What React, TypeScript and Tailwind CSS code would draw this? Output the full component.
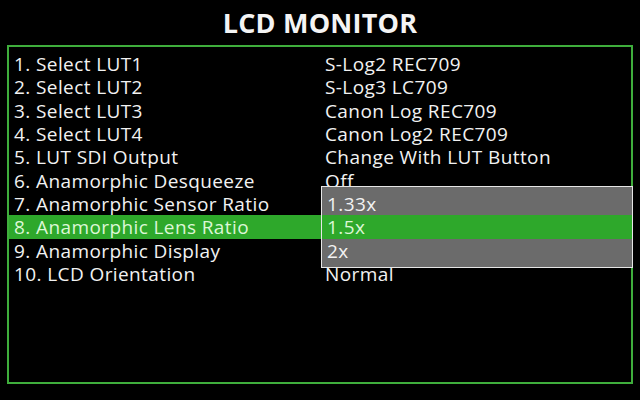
const rows = [
  ["1. Select LUT1", "S-Log2 REC709"],
  ["2. Select LUT2", "S-Log3 LC709"],
  ["3. Select LUT3", "Canon Log REC709"],
  ["4. Select LUT4", "Canon Log2 REC709"],
  ["5. LUT SDI Output", "Change With LUT Button"],
  ["6. Anamorphic Desqueeze", "Off"],
  ["7. Anamorphic Sensor Ratio", ""],
  ["8. Anamorphic Lens Ratio", ""],
  ["9. Anamorphic Display", ""],
  ["10. LCD Orientation", "Normal"],
];

const options = ["1.33x", "1.5x", "2x"];

export default function App() {
  return (
    <div
      className="relative h-[400px] w-[640px] overflow-hidden bg-black text-white"
      style={{ fontFamily: '"Open Sans", "Noto Sans", sans-serif' }}
    >
      <div className="flex h-[45px] items-center justify-center pt-[1px] text-[27px] leading-[32px] font-bold tracking-[0.2px] text-[#f4f4f4]">
        LCD MONITOR
      </div>
      <div className="mx-[7px] h-[339px] border-2 border-[#3fae3c] pt-[5px]">
        {rows.map(([label, value], i) => {
          const active = i === 7;
          return (
            <div
              key={label}
              className={
                active
                  ? "flex h-[23.33px] items-center bg-[#2ea82b] pt-[2px] text-[19px] leading-[21px] tracking-[0.4px] text-[#dcf7d6]"
                  : "flex h-[23.33px] items-center pt-[2px] text-[19px] leading-[21px] tracking-[0.4px] text-[#f2f2f2]"
              }
            >
              <div className="w-[316px] pl-[5px] whitespace-nowrap">{label}</div>
              <div className="whitespace-nowrap">{value}</div>
            </div>
          );
        })}
      </div>
      <div className="absolute left-[321px] top-[186px] h-[82px] w-[312px] border border-[#e6e6e6] bg-[#6b6b6b] pt-[5px]">
        {options.map((opt, i) => (
          <div
            key={opt}
            className={
              i === 1
                ? "flex h-[23.33px] items-center bg-[#2ea82b] pt-[2px] pl-[5px] text-[19px] leading-[21px] tracking-[0.4px] text-[#dcf7d6]"
                : "flex h-[23.33px] items-center pt-[2px] pl-[5px] text-[19px] leading-[21px] tracking-[0.4px] text-[#f2f2f2]"
            }
          >
            {opt}
          </div>
        ))}
      </div>
    </div>
  );
}
